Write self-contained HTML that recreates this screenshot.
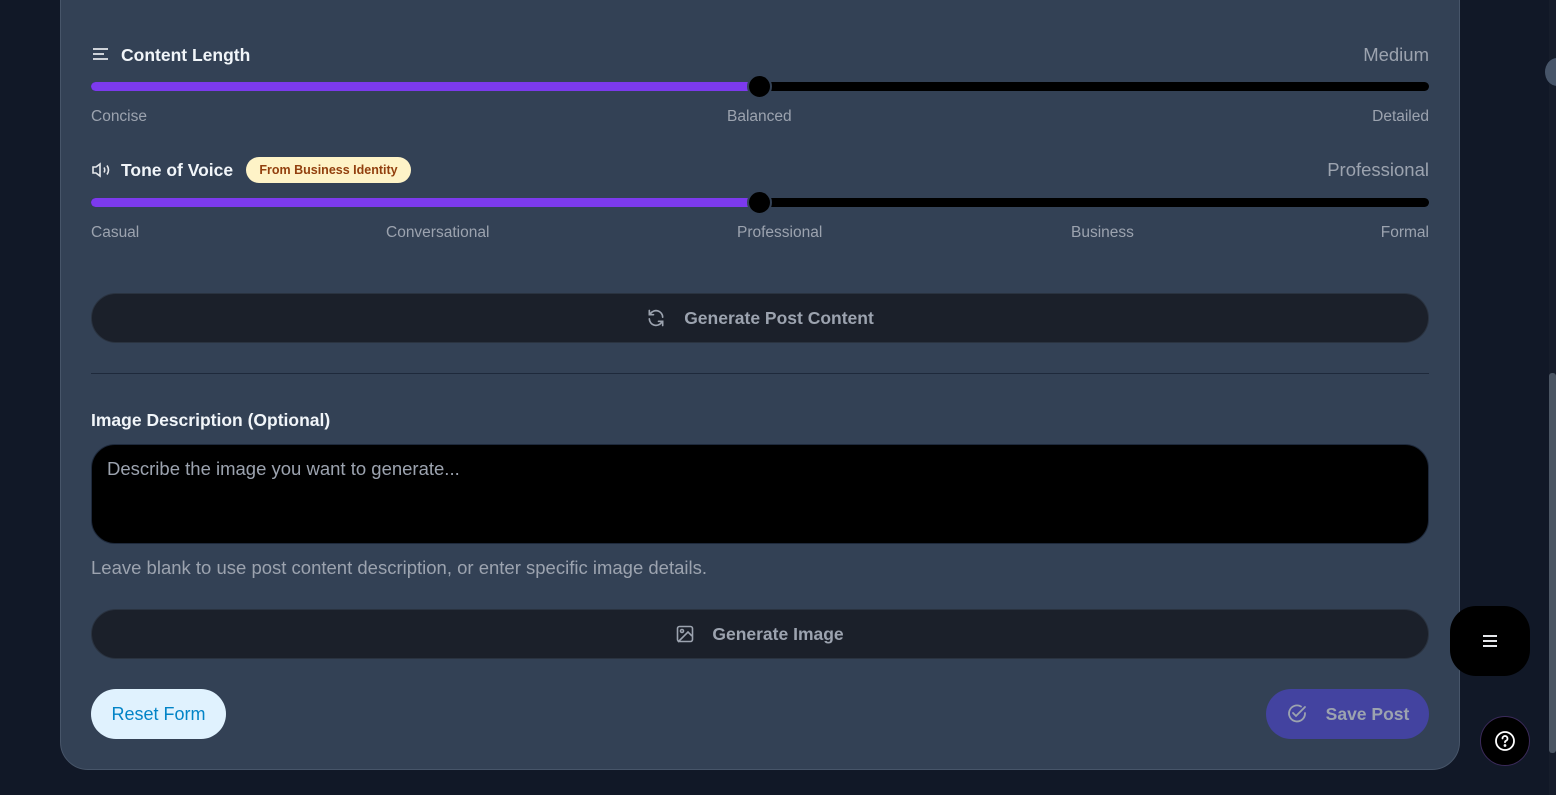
<!DOCTYPE html>
<html><head><meta charset="utf-8"><style>
*{margin:0;padding:0;box-sizing:border-box}
body{width:1556px;height:795px;background:#111827;font-family:"Liberation Sans",sans-serif;position:relative;overflow:hidden}
.a{position:absolute}
.card{left:60px;top:-40px;width:1400px;height:810px;background:#334155;border:1px solid #475569;border-radius:28px}
.h{font-size:17.5px;font-weight:bold;color:#f1f5f9}
.lbl{font-size:15.5px;color:#9ca3af}
.val{font-size:18.5px;color:#9ca3af}
.track{left:91px;width:1338px;height:9px;background:#000;border-radius:5px}
.fill{left:0;top:0;height:9px;width:669px;background:#7c3aed;border-radius:5px}
.thumb{width:25px;height:25px;border-radius:50%;background:#000;border:2px solid #334155}
.btn{left:91px;width:1338px;height:50px;background:#1b202a;border:1px solid #2a3340;border-radius:25px;color:#9ca3af;font-size:17.5px;font-weight:bold;display:flex;align-items:center;justify-content:center;gap:18px}
</style></head><body>
<div class="a card"></div>
<svg class="a" style="left:92px;top:47px" width="17" height="14" viewBox="0 0 17 14" fill="none" stroke="#e5e7eb" stroke-width="1.8"><path d="M1 2h15M1 7h11M1 12h15"/></svg>
<div class="a h" style="left:121px;top:45px">Content Length</div>
<div class="a val" style="right:127px;top:44px">Medium</div>
<div class="a track" style="top:82px"><div class="a fill"></div></div>
<div class="a thumb" style="left:747px;top:74px"></div>
<div class="a lbl" style="left:91px;top:108px">Concise</div>
<div class="a lbl" style="left:727px;top:108px">Balanced</div>
<div class="a lbl" style="right:127px;top:108px">Detailed</div>

<svg class="a" style="left:91px;top:162px" width="20" height="16" viewBox="0 0 20 16" fill="none" stroke="#e5e7eb" stroke-width="1.6"><path d="M2 5h3l4-3v12l-4-3H2z"/><path d="M13 5.5q1.5 2.5 0 5M16 3.5q3 4.5 0 9"/></svg>
<div class="a h" style="left:121px;top:160px">Tone of Voice</div>
<div class="a" style="left:246px;top:157px;width:165px;height:26px;background:#fef3c7;border-radius:13px;color:#92400e;font-size:12.5px;font-weight:bold;line-height:26px;text-align:center">From Business Identity</div>
<div class="a val" style="right:127px;top:159px">Professional</div>
<div class="a track" style="top:198px"><div class="a fill"></div></div>
<div class="a thumb" style="left:747px;top:190px"></div>
<div class="a lbl" style="left:91px;top:224px">Casual</div>
<div class="a lbl" style="left:386px;top:224px">Conversational</div>
<div class="a lbl" style="left:737px;top:224px">Professional</div>
<div class="a lbl" style="left:1071px;top:224px">Business</div>
<div class="a lbl" style="right:127px;top:224px">Formal</div>

<div class="a btn" style="top:293px"><svg width="20" height="20" viewBox="0 0 24 24" fill="none" stroke="#9ca3af" stroke-width="2" stroke-linecap="round"><path d="M20 11A8 8 0 0 0 5.5 6.5L4 8M4 3v5h5M4 13a8 8 0 0 0 14.5 4.5L20 16M20 21v-5h-5"/></svg><span>Generate Post Content</span></div>
<div class="a" style="left:91px;top:373px;width:1338px;height:1px;background:#1e293b"></div>
<div class="a h" style="left:91px;top:410px">Image Description (Optional)</div>
<div class="a" style="left:91px;top:444px;width:1338px;height:100px;background:#000;border:1px solid #1e293b;border-radius:24px"></div>
<div class="a" style="left:107px;top:458px;font-size:18.5px;color:#9ca3af">Describe the image you want to generate...</div>
<div class="a" style="left:91px;top:557px;font-size:18.5px;color:#9ca3af">Leave blank to use post content description, or enter specific image details.</div>
<div class="a btn" style="top:609px"><svg width="18" height="18" viewBox="0 0 18 18" fill="none" stroke="#9ca3af" stroke-width="1.6"><rect x="1.5" y="1.5" width="15" height="15" rx="2"/><circle cx="6" cy="6" r="1.5"/><path d="M16 11l-4-4-10 10"/></svg><span>Generate Image</span></div>
<div class="a" style="left:91px;top:689px;width:135px;height:50px;background:#e0f2fe;border-radius:25px;color:#0284c7;font-size:18px;line-height:50px;text-align:center">Reset Form</div>
<div class="a" style="left:1266px;top:689px;width:163px;height:50px;background:#4343a0;border-radius:25px;color:#9ca3af;font-size:17.5px;font-weight:bold;display:flex;align-items:center;justify-content:center;gap:18px"><svg width="22" height="22" viewBox="0 0 22 22" fill="none" stroke="#9ca3af" stroke-width="1.8" stroke-linecap="round"><path d="M19 10a8 8 0 1 1-4-6.5"/><path d="M7 10l3 3 9-9"/></svg><span>Save Post</span></div>
<div class="a" style="left:1450px;top:606px;width:80px;height:70px;background:#000;border-radius:26px"></div>
<svg class="a" style="left:1482px;top:635px" width="16" height="12" viewBox="0 0 16 12" stroke="#e5e7eb" stroke-width="2"><path d="M1 1h14M1 6h14M1 11h14"/></svg>
<div class="a" style="left:1480px;top:716px;width:50px;height:50px;background:#000;border:1px solid #3b2a5a;border-radius:50%"></div>
<svg class="a" style="left:1494px;top:730px" width="22" height="22" viewBox="0 0 22 22" fill="none" stroke="#fff" stroke-width="1.8" stroke-linecap="round"><circle cx="11" cy="11" r="9"/><path d="M8.5 8.5a2.5 2.5 0 1 1 3.5 2.3c-.7.3-1 .8-1 1.5"/><circle cx="11" cy="15.5" r=".5" fill="#fff"/></svg>
<div class="a" style="left:1549px;top:0;width:7px;height:795px;background:#161d2b"></div>
<div class="a" style="left:1549px;top:373px;width:7px;height:380px;background:#4b5563;border-radius:3px"></div>
<div class="a" style="left:1545px;top:58px;width:24px;height:28px;background:#475569;border-radius:50%"></div>
</body></html>
